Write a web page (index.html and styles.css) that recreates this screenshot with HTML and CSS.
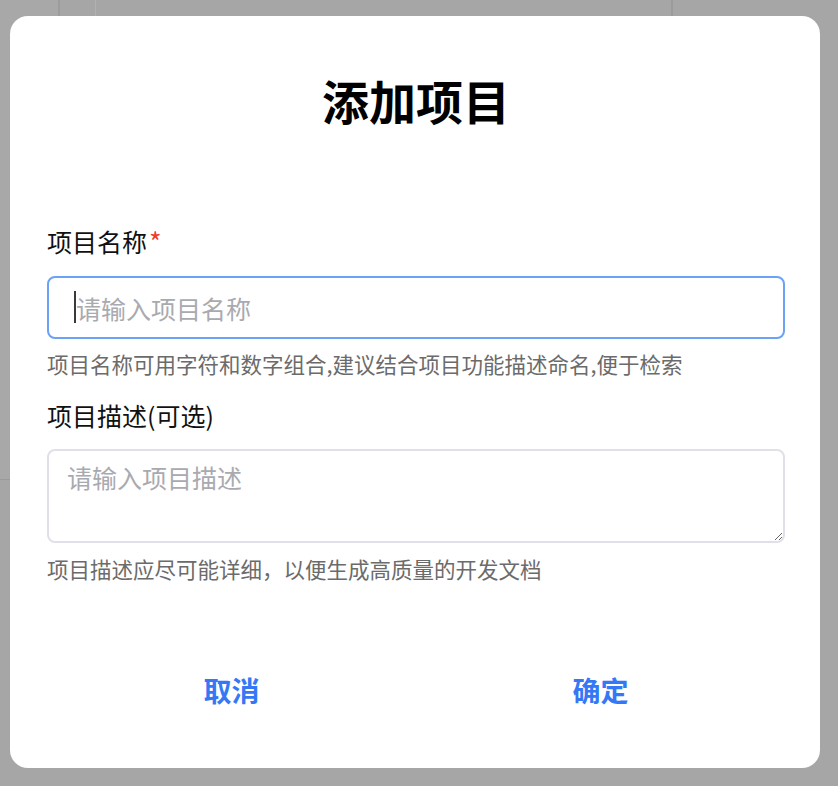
FILE: index.html
```html
<!DOCTYPE html>
<html lang="zh-CN">

<head>
    <meta charset="UTF-8">
    <meta name="viewport" content="width=device-width, initial-scale=1.0">
    <title>添加项目</title>

    <link rel="stylesheet" href="styles.css">
</head>

<body>
    <!-- página de fondo, tapada por la capa gris -->
    <div class="backdrop">
        <div class="bg-side"></div>
        <div class="bg-col"></div>
        <div class="bg-col bg-col-right"></div>
    </div>

    <div class="overlay">
        <div class="dialog">
            <h1 class="dialog-title">添加项目</h1>

            <div class="field">
                <label class="field-label" for="projectName">项目名称<span class="required">*</span></label>
                <div class="input-wrap">
                    <input id="projectName" class="field-input is-focused" type="text" placeholder="请输入项目名称">
                    <span class="caret"></span>
                </div>
                <p class="field-hint">项目名称可用字符和数字组合,建议结合项目功能描述命名,便于检索</p>
            </div>

            <div class="field field-desc">
                <label class="field-label" for="projectDesc">项目描述(可选)</label>
                <textarea id="projectDesc" class="field-textarea" placeholder="请输入项目描述"></textarea>
                <p class="field-hint">项目描述应尽可能详细，以便生成高质量的开发文档</p>
            </div>

            <div class="dialog-actions">
                <button class="action-btn">取消</button>
                <button class="action-btn">确定</button>
            </div>
        </div>
    </div>
</body>
</html>
```
FILE: styles.css
```css
* {
    box-sizing: border-box;
}

body {
    margin: 0;
    padding: 0;
    height: 786px;
    overflow: hidden;
    font-family: "Noto Sans CJK SC", "Noto Sans", sans-serif;
    background-color: #a6a6a6;
    position: relative;
}

.backdrop {
    position: absolute;
    inset: 0;
}

.bg-side {
    position: absolute;
    left: 0;
    top: 0;
    width: 60px;
    height: 480px;
    border-right: 2px solid #9c9c9c;
    border-bottom: 1px solid #9a9a9a;
    background-color: #a8a8a8;
}

.bg-col {
    position: absolute;
    left: 95px;
    top: 0;
    width: 1px;
    height: 16px;
    background-color: #b0b0b0;
}

.bg-col-right {
    left: 671px;
    width: 2px;
    background-color: #9b9b9b;
}

.overlay {
    position: absolute;
    inset: 0;
    padding: 16px 18px 18px 10px;
    display: flex;
}

.dialog {
    flex: 1;
    background-color: #fff;
    border-radius: 18px;
    padding: 56px 35px 0 37px;
    display: flex;
    flex-direction: column;
}

.dialog-title {
    margin: 0 0 96px;
    font-size: 47px;
    line-height: 56px;
    font-weight: 700;
    text-align: center;
    color: #000;
}

.field-label {
    display: block;
    font-size: 25px;
    line-height: 35px;
    color: #111;
    margin-bottom: 16px;
}

.field:first-of-type .field-label {
    margin-bottom: 17px;
}

.required {
    color: #f03a2e;
    font-size: 27px;
    line-height: 20px;
    margin-left: 2px;
    position: relative;
    top: 1px;
}

.input-wrap {
    position: relative;
}

.caret {
    position: absolute;
    left: 27px;
    top: 15px;
    width: 2px;
    height: 32px;
    background-color: #3a3a3a;
}

.field-input,
.field-textarea {
    display: block;
    width: 100%;
    font-family: inherit;
    font-size: 25px;
    color: #222;
    background-color: #fff;
    border: 2px solid #dfe0ea;
    border-radius: 8px;
    outline: none;
}

.field-input {
    height: 63px;
    padding: 0 20px 0 27px;
}

.field-input.is-focused {
    border-color: #6aa2f6;
}

.field-textarea {
    height: 94px;
    padding: 9px 18px;
    line-height: 35px;
    resize: both;
}

.field-input::placeholder,
.field-textarea::placeholder {
    color: #a9aab0;
}

.field-hint {
    margin: 9px 0 0;
    font-size: 21.5px;
    line-height: 32px;
    color: #6b6b6b;
}

.field-desc {
    margin-top: 18px;
}

.field-desc .field-hint {
    margin-top: 10px;
}

.dialog-actions {
    display: flex;
    margin-top: 85px;
}

.action-btn {
    flex: 1;
    background: none;
    border: none;
    padding: 0;
    font-family: inherit;
    font-size: 28px;
    line-height: 40px;
    font-weight: 700;
    color: #3478f6;
    cursor: pointer;
}
```
